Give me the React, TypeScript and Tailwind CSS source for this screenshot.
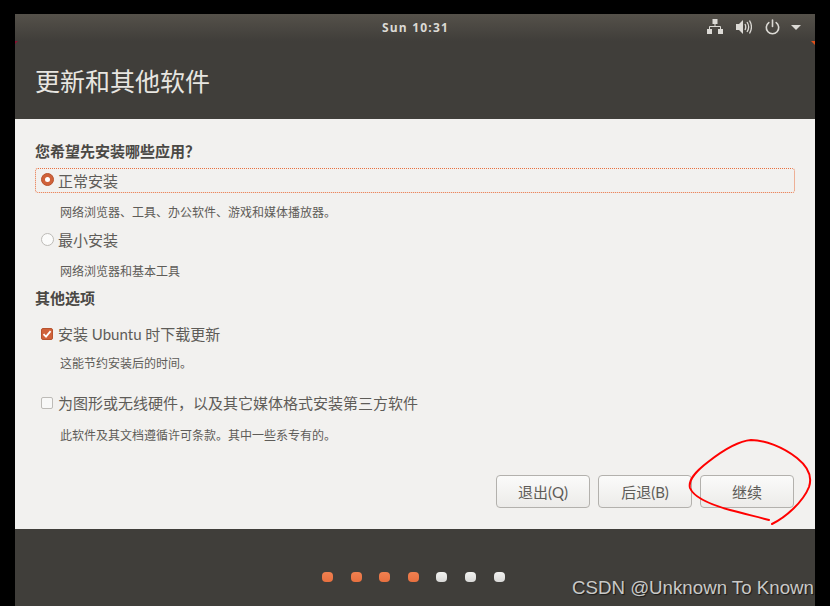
const uiFont = { fontFamily: '"Open Sans", "Noto Sans CJK SC", sans-serif' };
const labelFont = { fontFamily: 'Lato, "Noto Sans CJK SC", sans-serif' };

function NetworkIcon() {
  return (
    <svg width="16" height="16" viewBox="0 0 16 16" className="text-[#dcdad5]">
      <path fill="currentColor" d="M5.5 0h5v5h-5zM0 10h5v5H0zM11 10h5v5h-5z" />
      <path fill="none" stroke="currentColor" d="M8 5v3M2.5 10V7.5h11V10" />
    </svg>
  );
}

function SoundIcon() {
  return (
    <svg width="16" height="16" viewBox="0 0 16 16" className="text-[#dcdad5]">
      <path fill="currentColor" d="M0 5h3l4-4v14l-4-4H0z" />
      <path fill="none" stroke="currentColor" strokeWidth="1.3" d="M9 5c1 2 1 4 0 6M11 3c2 3 2 7 0 10M13.5 1.5c2.4 4 2.4 9 0 13" />
    </svg>
  );
}

function PowerIcon() {
  return (
    <svg width="15" height="16" viewBox="0 0 15 16" className="text-[#dcdad5]">
      <path fill="none" stroke="currentColor" strokeWidth="1.6" strokeLinecap="round" d="M7.5 1v6.5M3.8 3.6a6.2 6.2 0 1 0 7.4 0" />
    </svg>
  );
}

function Radio({ checked }: { checked?: boolean }) {
  return (
    <span
      className={
        checked
          ? 'w-[13px] h-[13px] -mt-[2px] rounded-full bg-[#d0623a] border border-[#b8532e] flex items-center justify-center shrink-0'
          : 'w-[13px] h-[13px] -mt-[2px] rounded-full bg-[#fbfbfa] border border-[#bdbbb7] shrink-0'
      }
    >
      {checked && <span className="w-[5px] h-[5px] rounded-full bg-white" />}
    </span>
  );
}

function Checkbox({ checked }: { checked?: boolean }) {
  return (
    <span
      className={
        checked
          ? 'w-[12px] h-[12px] rounded-[2px] bg-[#d0623a] border border-[#b8532e] flex items-center justify-center shrink-0'
          : 'w-[12px] h-[12px] rounded-[2px] bg-[#f8f8f7] border border-[#bdbbb7] shrink-0'
      }
    >
      {checked && (
        <svg width="10" height="10" viewBox="0 0 10 10">
          <path d="M1.5 5.2 4 7.6 8.6 2.2" fill="none" stroke="#fff" strokeWidth="1.8" />
        </svg>
      )}
    </span>
  );
}

function Button({ label }: { label: string }) {
  return (
    <button
      className="w-[94px] h-[33px] rounded-[4px] border border-[#b3b1ad] bg-gradient-to-b from-[#fbfbfa] to-[#ecebe9] text-[15px] text-[#5e5c58] pt-[1px]"
      style={labelFont}
    >
      {label}
    </button>
  );
}

export default function App() {
  const dots = ['a', 'b', 'c', 'd'];
  const greyDots = ['e', 'f', 'g'];

  return (
    <div lang="zh-CN" className="relative w-[830px] h-[606px] overflow-hidden bg-black pt-[14px] px-[15px]" style={uiFont}>
      <div className="flex flex-col h-[592px] bg-[#403e3a]">
        {/* 상단 패널 */}
        <div className="h-[27px] shrink-0 flex items-center bg-gradient-to-b from-[#55514a] to-[#403e3a] relative">
          <span className="w-full text-center text-[12px] font-bold tracking-[1.2px] text-[#dcdad5] pl-[1px]">Sun 10:31</span>
          <div className="absolute right-[14px] top-[5px] flex items-center">
            <NetworkIcon />
            <span className="w-[13px]" />
            <SoundIcon />
            <span className="w-[13px]" />
            <PowerIcon />
            <span className="w-[11px]" />
            <span className="w-0 h-0 border-l-[5px] border-r-[5px] border-t-[5px] border-l-transparent border-r-transparent border-t-[#dcdad5]" />
          </div>
        </div>

        {/* 제목 */}
        <div className="h-[78px] shrink-0 flex items-center pl-[20px] pt-[2px]">
          <h1 className="text-[25px] font-normal text-[#e8e6e1] leading-none">更新和其他软件</h1>
        </div>

        {/* 본문 */}
        <div className="h-[410px] shrink-0 bg-[#f2f1ef] flex flex-col pl-[20px] pr-[20px] pt-[23px] text-[#5e5c58]">
          <h2 className="h-[18px] leading-[18px] text-[15px] font-bold text-[#4a4844]">您希望先安装哪些应用？</h2>

          <div className="mt-[8px] h-[25px] flex items-center gap-[4px] pl-[5px] rounded-[3px] border border-dotted border-[#e9703f]">
            <Radio checked />
            <span className="text-[15px] pt-[1px]">正常安装</span>
          </div>
          <p className="mt-[13px] ml-[25px] h-[14px] leading-[14px] text-[12px]">网络浏览器、工具、办公软件、游戏和媒体播放器。</p>

          <div className="mt-[8px] h-[24px] flex items-center gap-[4px] pl-[6px]">
            <Radio />
            <span className="text-[15px]">最小安装</span>
          </div>
          <p className="mt-[13px] ml-[25px] h-[14px] leading-[14px] text-[12px]">网络浏览器和基本工具</p>

          <h2 className="mt-[10px] h-[18px] leading-[18px] text-[15px] font-bold text-[#4a4844]">其他选项</h2>

          <div className="mt-[15px] h-[24px] flex items-center gap-[5px] pl-[6px]">
            <Checkbox checked />
            <span className="text-[15px]" style={labelFont}>安装 Ubuntu 时下载更新</span>
          </div>
          <p className="mt-[11px] ml-[25px] h-[14px] leading-[14px] text-[12px]">这能节约安装后的时间。</p>

          <div className="mt-[20px] h-[24px] flex items-center gap-[5px] pl-[6px]">
            <Checkbox />
            <span className="text-[15px]">为图形或无线硬件，以及其它媒体格式安装第三方软件</span>
          </div>
          <p className="mt-[14px] ml-[25px] h-[14px] leading-[14px] text-[12px]">此软件及其文档遵循许可条款。其中一些系专有的。</p>

          <div className="mt-auto mb-[21px] flex justify-end gap-[8px] mr-[1px]">
            <Button label="退出(Q)" />
            <Button label="后退(B)" />
            <Button label="继续" />
          </div>
        </div>

        {/* 진행 표시 */}
        <div className="flex-1 flex items-start pt-[43px] pl-[307px] gap-[17.6px]">
          {dots.map((d) => (
            <span key={d} className="w-[11px] h-[10px] rounded-[4px] bg-gradient-to-b from-[#f08050] to-[#e8703f]" />
          ))}
          {greyDots.map((d) => (
            <span key={d} className="w-[11px] h-[10px] rounded-[4px] bg-gradient-to-b from-[#f2f2f0] to-[#d8d8d6]" />
          ))}
        </div>
      </div>

      {/* 패널 모서리 아래로 비치는 배경색 */}
      <span className="absolute left-[15px] top-[41px] w-0 h-0 border-t-[3px] border-r-[3px] border-t-[#8a1030] border-r-transparent" />
      <span className="absolute left-[811px] top-[41px] w-0 h-0 border-t-[4px] border-l-[4px] border-t-[#e0501a] border-l-transparent" />

      {/* 손으로 그린 빨간 원 */}
      <svg className="absolute left-0 top-0 pointer-events-none" width="830" height="606" viewBox="0 0 830 606">
        <path
          d="M772 524C786 517 803 502 809 487C813 475 807 466 797 458C783 447 765 440 751 440C738 441 722 451 708 462C695 472 688 480 690 488C694 498 712 505 730 510C745 514 758 517 769 520"
          fill="none"
          stroke="#f00"
          strokeWidth="2"
          strokeLinecap="round"
        />
      </svg>

      {/* 워터마크 */}
      <span
        className="absolute left-[572px] top-[577px] text-[18.7px] leading-[22px] whitespace-nowrap text-[#c9c9c7] [text-shadow:1px_1px_1px_#1a1a1a]"
        style={{ fontFamily: '"Liberation Sans", sans-serif' }}
      >
        CSDN @Unknown To Known
      </span>
    </div>
  );
}
